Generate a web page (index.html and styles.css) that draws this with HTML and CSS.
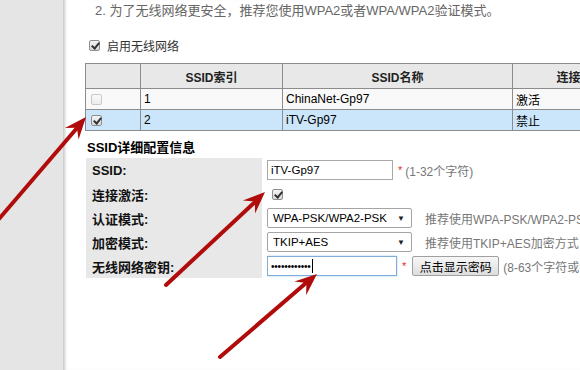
FILE: index.html
```html
<!DOCTYPE html>
<html lang="zh-CN">
<head>
    <meta charset="UTF-8">
    <title>无线网络配置</title>
    <link rel="stylesheet" href="styles.css">
</head>
<body>
    <div class="page">
        <aside class="sidebar"></aside>
        <main class="main">
            <p class="note">2. 为了无线网络更安全，推荐您使用WPA2或者WPA/WPA2验证模式。</p>
            <div class="enable">
                <span class="chk on"></span>
                <span>启用无线网络</span>
            </div>

            <table class="ssid-table">
                <colgroup>
                    <col class="c-sel"><col class="c-idx"><col class="c-name"><col class="c-state">
                </colgroup>
                <tr class="head">
                    <th></th>
                    <th>SSID索引</th>
                    <th>SSID名称</th>
                    <th>连接状态</th>
                </tr>
                <tr class="row-off">
                    <td><span class="chk disabled"></span></td>
                    <td>1</td>
                    <td>ChinaNet-Gp97</td>
                    <td>激活</td>
                </tr>
                <tr class="row-on">
                    <td><span class="chk on"></span></td>
                    <td>2</td>
                    <td>iTV-Gp97</td>
                    <td>禁止</td>
                </tr>
            </table>

            <h3 class="section-title">SSID详细配置信息</h3>
            <div class="detail">
                <div class="label">SSID:</div>
                <div class="field">
                    <div class="textbox ssid">iTV-Gp97</div>
                    <span class="star">*</span>
                    <span class="hint tight">(1-32个字符)</span>
                </div>

                <div class="label">连接激活:</div>
                <div class="field"><span class="chk on"></span></div>

                <div class="label">认证模式:</div>
                <div class="field">
                    <div class="select"><span>WPA-PSK/WPA2-PSK</span><span class="caret">▼</span></div>
                    <span class="hint">推荐使用WPA-PSK/WPA2-PSK</span>
                </div>

                <div class="label">加密模式:</div>
                <div class="field">
                    <div class="select"><span>TKIP+AES</span><span class="caret">▼</span></div>
                    <span class="hint">推荐使用TKIP+AES加密方式</span>
                </div>

                <div class="label">无线网络密钥:</div>
                <div class="field">
                    <div class="textbox password"><span class="dots">••••••••••••</span><span class="cursor"></span></div>
                    <span class="star">*</span>
                    <button class="btn-show">点击显示密码</button>
                    <span class="hint tight">(8-63个字符或者64个十六进制字符)</span>
                </div>
            </div>
        </main>

        <!-- red pointer arrows drawn over the page -->
        <svg class="arrows" width="580" height="370" viewBox="0 0 580 370">
            <g stroke="#b10c0c" stroke-width="4" stroke-linecap="round" fill="none">
                <line x1="-20" y1="241" x2="77" y2="128"/>
                <line x1="166" y1="285" x2="255" y2="202"/>
                <line x1="220" y1="357" x2="306" y2="283"/>
            </g>
            <g fill="#b10c0c">
                <path transform="translate(86 117) rotate(-49.6)" d="M0,0 L-22,-9 L-14,0 L-22,9 Z"/>
                <path transform="translate(265 192) rotate(-43.2)" d="M0,0 L-22,-9 L-14,0 L-22,9 Z"/>
                <path transform="translate(317 274) rotate(-40.6)" d="M0,0 L-22,-9 L-14,0 L-22,9 Z"/>
            </g>
        </svg>
    </div>
</body>
</html>
```

FILE: styles.css
```css
body {
    margin: 0;
    font-family: "Liberation Sans", "Noto Sans CJK SC", sans-serif;
    color: #000;
    background: #fff;
    overflow: hidden;
}
.page {
    position: relative;
    display: flex;
    width: 580px;
    height: 370px;
    overflow: hidden;
}
.sidebar {
    flex: 0 0 63px;
    background-color: #e5e5e5;
}
.main {
    flex: 1;
    min-width: 0;
    padding-left: 22px;
    box-shadow: inset 4px 0 3px -2px rgba(0, 0, 0, 0.22);
    overflow: hidden;
}
.note {
    margin: 0;
    padding: 3px 0 0 10px;
    font-size: 13px;
    line-height: 16px;
    color: #666;
    white-space: nowrap;
}
.enable {
    display: flex;
    align-items: center;
    gap: 7px;
    margin-top: 18px;
    padding-left: 4px;
    height: 16px;
    font-size: 12px;
    color: #333;
}

/* checkboxes */
.chk {
    position: relative;
    display: inline-block;
    width: 11px;
    height: 11px;
    box-sizing: border-box;
    border: 1px solid #8e8e8e;
    border-radius: 2px;
    background: linear-gradient(#f4f4f4, #d9d9d9);
    flex: none;
}
.chk.disabled {
    border-color: #c9c9c9;
    background: linear-gradient(#fafafa, #ececec);
}
.chk.on::after {
    content: "";
    position: absolute;
    left: 3px;
    top: 0;
    width: 3px;
    height: 6px;
    border: solid #333;
    border-width: 0 2px 2px 0;
    transform: rotate(40deg);
}

/* ssid list */
.ssid-table {
    margin-top: 10px;
    width: 563px;
    table-layout: fixed;
    border-collapse: collapse;
    font-size: 12px;
}
.c-sel { width: 55px; }
.c-idx { width: 142px; }
.c-name { width: 230px; }
.c-state { width: 136px; }
.ssid-table th,
.ssid-table td {
    border: 1px solid #8c8c8c;
    padding: 0 3px;
    white-space: nowrap;
    text-align: left;
}
.ssid-table th {
    height: 24px;
    background-color: #e8e8e8;
    text-align: center;
    font-weight: bold;
    color: #222;
}
.ssid-table td {
    height: 20px;
}
.ssid-table td:first-child {
    padding-left: 5px;
    line-height: 0;
}
.row-off td { background-color: #f9f9f9; }
.row-on td { background-color: #cbe6fa; }

/* detail form */
.section-title {
    margin: 9px 0 2px 2px;
    font-size: 13px;
    line-height: 16px;
    font-weight: bold;
}
.detail {
    display: grid;
    grid-template-columns: 176px 1fr;
    grid-auto-rows: 24px;
    column-gap: 5px;
    margin-left: 1px;
}
.label {
    display: flex;
    align-items: center;
    padding-left: 6px;
    background-color: #e8e8e8;
    font-size: 13px;
    font-weight: bold;
    color: #111;
}
.field {
    display: flex;
    align-items: center;
    white-space: nowrap;
    overflow: hidden;
    font-size: 12px;
}
.field > * {
    flex: none;
}
.field > .chk {
    margin-left: 5px;
}
.textbox {
    display: flex;
    align-items: center;
    height: 20px;
    box-sizing: border-box;
    padding: 0 3px;
    border: 1px solid #a9a9a9;
    font-size: 11.5px;
    background: #fff;
}
.textbox.ssid { width: 126px; }
.textbox.password {
    width: 130px;
    border-color: #7eadd9;
    box-shadow: 0 0 2px #a6cdf0;
}
.dots {
    font-size: 10px;
    letter-spacing: -0.2px;
}
.cursor {
    width: 1px;
    height: 14px;
    background: #000;
    margin-left: 1px;
}
.select {
    display: flex;
    align-items: center;
    justify-content: space-between;
    width: 145px;
    height: 20px;
    box-sizing: border-box;
    padding: 0 6px 0 5px;
    border: 1px solid #a5a5a5;
    border-radius: 2px;
    font-size: 11.5px;
    background: #fff;
}
.caret {
    font-size: 8px;
    color: #222;
}
.star {
    color: #e23030;
    margin: 0 3px 0 5px;
    font-size: 11px;
}
.hint {
    color: #777;
    margin-left: 13px;
}
.hint.tight {
    margin-left: 0;
}
.btn-show {
    height: 20px;
    width: 87px;
    padding: 0;
    margin: 0 4px 0 3px;
    border: 1px solid #a0a0a0;
    border-radius: 2px;
    background: linear-gradient(#f7f7f7, #dddddd);
    font-family: "Liberation Sans", "Noto Sans CJK SC", sans-serif;
    font-size: 12px;
    color: #000;
}
.arrows {
    position: absolute;
    left: 0;
    top: 0;
    pointer-events: none;
}
```
